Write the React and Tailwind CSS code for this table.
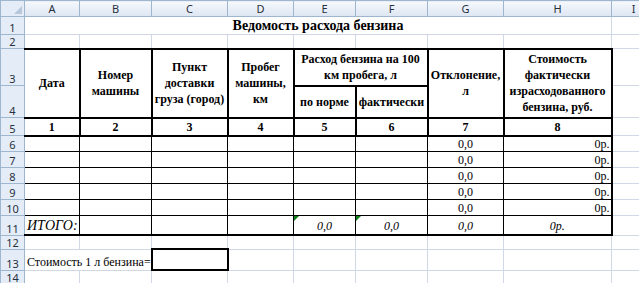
const COLS = [24, 55, 72, 76, 66, 62, 72, 76, 108, 44]
const LETTERS = ['A', 'B', 'C', 'D', 'E', 'F', 'G', 'H', 'I']

const grid = 'border border-[#d0d7e5] p-0'
const thick = 'border-2 border-black p-0 text-center align-middle font-bold text-[12px] leading-[16px] whitespace-nowrap'
const thin = 'border border-black p-0'

// cell text in the sheet's Times face
function T({ children }) {
  return <span className="font-['Liberation_Serif','Times_New_Roman',serif]">{children}</span>
}

function RowHead({ n, h }) {
  return (
    <td
      className={`border border-[#9eb6ce] bg-[#e4ecf7] p-0 text-center align-bottom text-[11px] leading-[13px] text-[#27303c] ${h}`}
    >
      {n}
    </td>
  )
}

function Flag() {
  return (
    <span className="absolute left-0 top-0 h-0 w-0 border-r-[5px] border-t-[5px] border-r-transparent border-t-[#12801c]" />
  )
}

export default function App() {
  const dataRows = [6, 7, 8, 9, 10]

  return (
    <div className="h-[283px] w-[639px] overflow-hidden bg-white text-black">
      <table className="table-fixed border-collapse" style={{ width: COLS.reduce((a, b) => a + b, 0) }}>
        <colgroup>
          {COLS.map((w, i) => (
            <col key={i} style={{ width: w }} />
          ))}
        </colgroup>
        <tbody>
          <tr>
            <td className="relative h-[16px] border border-[#9eb6ce] bg-[#e4ecf7] p-0">
              <span className="absolute bottom-[2px] right-[2px] h-0 w-0 border-b-[8px] border-l-[8px] border-b-[#b7c6da] border-l-transparent" />
            </td>
            {LETTERS.map((l) => (
              <td
                key={l}
                className="h-[16px] border border-[#9eb6ce] bg-linear-to-b from-[#f6f8fc] to-[#dde6f3] p-0 text-center align-middle text-[11px] leading-[13px] text-[#27303c]"
              >
                {l}
              </td>
            ))}
          </tr>

          <tr>
            <RowHead n={1} h="h-[18px]" />
            <td colSpan={8} className={`${grid} text-center align-middle text-[14px] font-bold leading-[16px]`}>
              <T>Ведомость расхода бензина</T>
            </td>
            <td className={grid} />
          </tr>

          <tr>
            <RowHead n={2} h="h-[14px]" />
            {LETTERS.map((l) => (
              <td key={l} className={grid} />
            ))}
          </tr>

          <tr>
            <RowHead n={3} h="h-[37px]" />
            <td rowSpan={2} className={`${thick} border-l border-l-[#9eb6ce]`}><T>Дата</T></td>
            <td rowSpan={2} className={thick}><T>Номер<br />машины</T></td>
            <td rowSpan={2} className={thick}><T>Пункт<br />доставки<br />груза (город)</T></td>
            <td rowSpan={2} className={thick}><T>Пробег<br />машины,<br />км</T></td>
            <td colSpan={2} className={thick}><T>Расход бензина на 100<br />км пробега, л</T></td>
            <td rowSpan={2} className={thick}><T>Отклонение,<br />л</T></td>
            <td rowSpan={2} className={thick}><T>Стоимость<br />фактически<br />израсходованного<br />бензина, руб.</T></td>
            <td className={grid} />
          </tr>

          <tr>
            <RowHead n={4} h="h-[32px]" />
            <td className={thick}><T>по норме</T></td>
            <td className={thick}><T>фактически</T></td>
            <td className={grid} />
          </tr>

          <tr>
            <RowHead n={5} h="h-[17px]" />
            {[1, 2, 3, 4, 5, 6, 7, 8].map((n) => (
              <td key={n} className={`${thick} ${n === 1 ? 'border-l border-l-[#9eb6ce]' : ''}`}>
                <T>{n}</T>
              </td>
            ))}
            <td className={grid} />
          </tr>

          {dataRows.map((r) => (
            <tr key={r}>
              <RowHead n={r} h="h-[16px]" />
              <td className={`${thin} border-l-[#9eb6ce]`} />
              <td className={thin} />
              <td className={thin} />
              <td className={thin} />
              <td className={thin} />
              <td className={thin} />
              <td className={`${thin} text-center align-bottom text-[12px] leading-[14px]`}><T>0,0</T></td>
              <td className={`${thin} border-r-2 pr-[1px] text-right align-bottom text-[12px] leading-[14px]`}><T>0р.</T></td>
              <td className={grid} />
            </tr>
          ))}

          <tr>
            <RowHead n={11} h="h-[19px]" />
            <td className={`${thin} border-b-2 border-l-[#9eb6ce] pl-[2px] align-bottom text-[14px] italic leading-[17px]`}><T>ИТОГО:</T></td>
            <td className={`${thin} border-b-2`} />
            <td className={`${thin} border-b-2`} />
            <td className={`${thin} border-b-2`} />
            <td className={`${thin} relative border-b-2 text-center align-bottom text-[12px] italic leading-[16px]`}>
              <Flag />
              <T>0,0</T>
            </td>
            <td className={`${thin} relative border-b-2 text-center align-bottom text-[12px] italic leading-[16px]`}>
              <Flag />
              <T>0,0</T>
            </td>
            <td className={`${thin} border-b-2 text-center align-bottom text-[12px] italic leading-[16px]`}><T>0,0</T></td>
            <td className={`${thin} border-b-2 border-r-2 text-center align-bottom text-[12px] italic leading-[16px]`}><T>0р.</T></td>
            <td className={grid} />
          </tr>

          <tr>
            <RowHead n={12} h="h-[13px]" />
            {LETTERS.map((l) => (
              <td key={l} className={grid} />
            ))}
          </tr>

          <tr>
            <RowHead n={13} h="h-[21px]" />
            <td colSpan={2} className={`${grid} whitespace-nowrap pl-[2px] align-bottom text-[12px] leading-[16px]`}>
              <T>Стоимость 1 л бензина=</T>
            </td>
            <td className="border-2 border-black p-0" />
            {['D', 'E', 'F', 'G', 'H', 'I'].map((l) => (
              <td key={l} className={grid} />
            ))}
          </tr>

          <tr>
            <RowHead n={14} h="h-[13px]" />
            {LETTERS.map((l) => (
              <td key={l} className={grid} />
            ))}
          </tr>
        </tbody>
      </table>
    </div>
  )
}
